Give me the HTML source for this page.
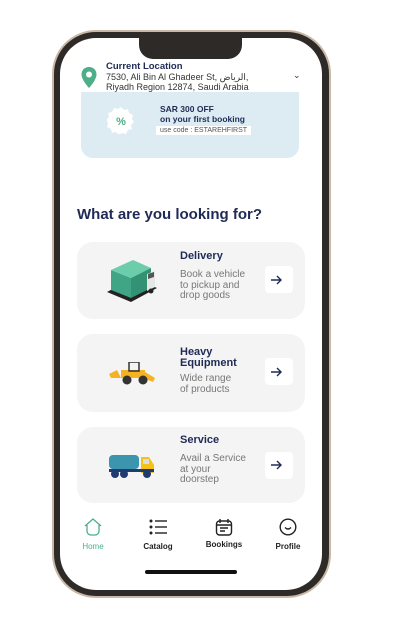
<!DOCTYPE html>
<html><head><meta charset="utf-8"><style>
*{margin:0;padding:0;box-sizing:border-box}
body{width:401px;height:623px;background:#fff;position:relative;overflow:hidden;font-family:"Liberation Sans",sans-serif}
.frame{position:absolute;left:52px;top:30px;width:279px;height:568px;border-radius:44px;background:#2e2a28;border:2px solid #c9b8a8}
.screen{position:absolute;left:60px;top:38px;width:262px;height:552px;border-radius:36px;background:#fff;overflow:hidden}
.notch{position:absolute;left:79px;top:0;width:103px;height:21px;background:#2e2a28;border-radius:0 0 14px 14px}
.abs{position:absolute}
.t{color:#1f2a55}
.card{position:absolute;left:17px;width:228px;background:#f4f4f5;border-radius:16px}
.card h3{position:absolute;left:103px;font-size:11px;font-weight:bold;color:#1f2a55;line-height:11px}
.card p{position:absolute;left:103px;font-size:10px;color:#777;line-height:10.5px}
.arr{position:absolute;left:188px;width:28px;height:27px;background:#fff;border-radius:4px}
.nav{position:absolute;top:480px;font-size:8px;font-weight:bold;color:#222;text-align:center;width:50px}
</style></head><body>
<div class="frame"></div>
<div class="screen">
<div class="notch"></div>
<svg class="abs" style="left:20px;top:28px" width="18" height="24" viewBox="0 0 18 24"><path d="M9 1C4.5 1 1.5 4.3 1.5 8.5 1.5 14 9 22 9 22s7.5-8 7.5-13.5C16.5 4.3 13.5 1 9 1z" fill="#4caf87"/><circle cx="9" cy="8.5" r="3" fill="#fff"/></svg>
<div class="abs t" style="left:46px;top:23px;font-size:9.5px;font-weight:bold">Current Location</div>
<div class="abs" style="left:46px;top:34px;font-size:9px;color:#333;line-height:10px">7530, Ali Bin Al Ghadeer St, الرياض,<br>Riyadh Region 12874, Saudi Arabia</div>
<div class="abs" style="left:233px;top:32px;font-size:9px;color:#333">⌄</div>
<div class="abs" style="left:21px;top:54px;width:218px;height:66px;background:#dcecf2;border-radius:0 0 12px 12px"></div>
<svg class="abs" style="left:47px;top:68px" width="28" height="28" viewBox="0 0 28 28"><path d="M14 1l3 3 4-1 1 4 4 2-1 4 2 3-3 3 1 4-4 1-2 4-4-1-3 2-3-3-4 1-1-4-4-2 1-4-2-3 3-3-1-4 4-1 2-4 4 1z" fill="#fff"/><text x="14" y="19" font-size="11" font-weight="bold" fill="#4caf87" text-anchor="middle" font-family="Liberation Sans">%</text></svg>
<div class="abs t" style="left:100px;top:66px;font-size:8.5px;font-weight:bold">SAR 300 OFF</div>
<div class="abs t" style="left:100px;top:76px;font-size:8.5px;font-weight:bold">on your first booking</div>
<div class="abs" style="left:96px;top:88px;background:#fff;padding:1px 4px;font-size:7px;color:#555">use code : ESTAREHFIRST</div>
<div class="abs t" style="left:17px;top:168px;font-size:15px;font-weight:bold">What are you looking for?</div>

<div class="card" style="top:204px;height:77px">
<svg class="abs" style="left:28px;top:12px" width="54" height="50" viewBox="0 0 54 50"><path d="M2 38l24 10 26-14-24-10z" fill="#222"/><path d="M6 16l20 8v20L6 36z" fill="#3fa585"/><path d="M6 16L28 6l18 8-20 10z" fill="#6ccdab"/><path d="M26 24l20-10v20L26 44z" fill="#349274"/><path d="M42 20l8-3v16l-8 4z" fill="#e6e6e6"/><path d="M43 20l6-2v5l-6 2z" fill="#555"/><circle cx="46" cy="37" r="2.5" fill="#222"/></svg>
<h3 style="top:9px">Delivery</h3>
<p style="top:28px">Book a vehicle<br>to pickup and<br>drop goods</p>
<div class="arr" style="top:24px"></div>
</div>

<div class="card" style="top:296px;height:78px">
<svg class="abs" style="left:30px;top:28px" width="52" height="24" viewBox="0 0 52 24"><path d="M2 12l8-4 4 8H4z" fill="#f5b324"/><rect x="14" y="8" width="24" height="8" fill="#f5b324"/><rect x="22" y="0" width="10" height="9" fill="none" stroke="#333" stroke-width="1.5"/><path d="M38 10l10 6-2 4-10-4z" fill="#f5b324"/><circle cx="20" cy="18" r="4.5" fill="#333"/><circle cx="36" cy="18" r="4.5" fill="#333"/></svg>
<h3 style="top:13px">Heavy<br>Equipment</h3>
<p style="top:40px">Wide range<br>of products</p>
<div class="arr" style="top:24px"></div>
</div>

<div class="card" style="top:389px;height:76px">
<svg class="abs" style="left:30px;top:24px" width="50" height="28" viewBox="0 0 50 28"><rect x="2" y="4" width="30" height="14" rx="4" fill="#3b95ae"/><path d="M34 6h8l5 8v8H34z" fill="#f5c018"/><rect x="36" y="8" width="6" height="5" fill="#ddd"/><rect x="2" y="18" width="45" height="3" fill="#1f3b70"/><circle cx="8" cy="23" r="4" fill="#1f3b70"/><circle cx="17" cy="23" r="4" fill="#1f3b70"/><circle cx="40" cy="23" r="4" fill="#1f3b70"/></svg>
<h3 style="top:8px">Service</h3>
<p style="top:27px">Avail a Service<br>at your<br>doorstep</p>
<div class="arr" style="top:25px"></div>
</div>
<svg class="abs" style="left:210px;top:237px" width="12" height="10" viewBox="0 0 12 10"><path d="M1 5h10M7 1l4 4-4 4" stroke="#1f2a55" stroke-width="1.4" fill="none"/></svg>
<svg class="abs" style="left:210px;top:329px" width="12" height="10" viewBox="0 0 12 10"><path d="M1 5h10M7 1l4 4-4 4" stroke="#1f2a55" stroke-width="1.4" fill="none"/></svg>
<svg class="abs" style="left:210px;top:422px" width="12" height="10" viewBox="0 0 12 10"><path d="M1 5h10M7 1l4 4-4 4" stroke="#1f2a55" stroke-width="1.4" fill="none"/></svg>

<svg class="abs" style="left:24px;top:480px" width="18" height="18" viewBox="0 0 18 18"><path d="M1 8L9 1l8 7M3 7v6a4 4 0 0 0 4 4h4a4 4 0 0 0 4-4V7" stroke="#4caf87" stroke-width="1.3" fill="none"/></svg>
<div class="nav" style="left:8px;top:504px;color:#4caf87;font-weight:normal">Home</div>
<svg class="abs" style="left:89px;top:481px" width="18" height="16" viewBox="0 0 18 16"><g fill="#222"><circle cx="2" cy="2" r="1.5"/><circle cx="2" cy="8" r="1.5"/><circle cx="2" cy="14" r="1.5"/><rect x="6" y="1.3" width="12" height="1.4"/><rect x="6" y="7.3" width="12" height="1.4"/><rect x="6" y="13.3" width="12" height="1.4"/></g></svg>
<div class="nav" style="left:73px;top:504px">Catalog</div>
<svg class="abs" style="left:155px;top:480px" width="18" height="18" viewBox="0 0 18 18"><rect x="1.5" y="3" width="15" height="14" rx="3" stroke="#222" stroke-width="1.4" fill="none"/><path d="M5 1v4M13 1v4M1.5 7h15M5 10h8M5 13h5" stroke="#222" stroke-width="1.4"/></svg>
<div class="nav" style="left:139px;top:502px">Bookings</div>
<svg class="abs" style="left:219px;top:480px" width="18" height="18" viewBox="0 0 18 18"><circle cx="9" cy="9" r="7.8" stroke="#222" stroke-width="1.4" fill="none"/><path d="M6 9.5q3 3 6 0" stroke="#222" stroke-width="1.4" fill="none"/></svg>
<div class="nav" style="left:203px;top:504px">Profile</div>
<div class="abs" style="left:85px;top:532px;width:92px;height:4px;border-radius:2px;background:#111"></div>
</div>
</body></html>
